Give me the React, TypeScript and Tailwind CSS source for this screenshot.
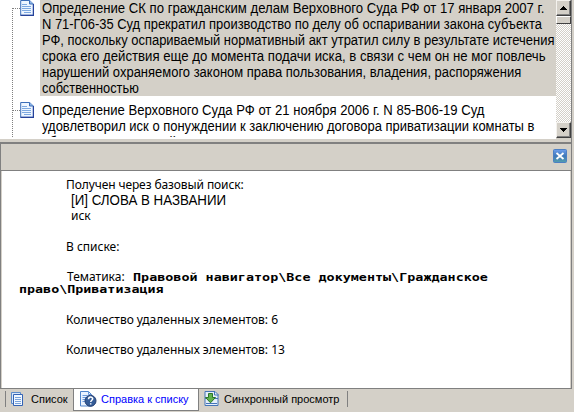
const DocIcon = () => (
  <svg width="14" height="16" viewBox="0 0 14 16" className="block shrink-0">
    <path d="M.7.5h9L13.3 4v11.3H.7z" fill="#eef6ff" stroke="#3c6eb8" />
    <path d="M9.5.5V4h4" fill="#8fb6e8" stroke="#3c6eb8" />
    <path d="M2 4.5h5M2 6.5h9M2 8.5h9M2 10.5h9M4 12.5h7" stroke="#7ea9e0" />
    <path d="M.5 15.3h13V4" fill="none" stroke="#26429a" strokeWidth="1.2" />
  </svg>
);

const ListIcon = () => (
  <svg width="13" height="14" viewBox="0 0 13 14" className="block shrink-0">
    <path d="M.5.5h9v11h-9z" fill="#d9e8fa" stroke="#5b8bcb" />
    <path d="M2.5 2.5h9v11h-9z" fill="#f2f8ff" stroke="#3463b4" />
    <path d="M4 5.500h6M4 7.500h6M4 9.500h6M4 11.500h6" stroke="#79a3dc" />
  </svg>
);

const HelpIcon = () => (
  <svg width="17" height="16" viewBox="0 0 17 16" className="block shrink-0">
    <path d="M.5.5h8l3 3v11.500H.5z" fill="#eaf3ff" stroke="#5085cb" />
    <path d="M8.500.5v3h3M2.500 4.500h5M2.500 6.500h5M2.500 8.500h3M2.500 10.500h3" fill="none" stroke="#6b9bdc" />
    <circle cx="10.500" cy="9.800" r="5.500" fill="#345c98" stroke="#233d70" />
    <path d="M8.500 8.300c0-3 4.200-2.700 4.200-.5 0 1.400-2 1.500-2 3.200M10.700 12.200v1.400" fill="none" stroke="#fff" strokeWidth="1.500" />
  </svg>
);

const SyncIcon = () => (
  <svg width="15" height="15" viewBox="0 0 15 15" className="block shrink-0">
    <path d="M1 .5h10l3 3v11H1z" fill="#e5effb" stroke="#4474b7" />
    <path d="M10.500.5v3.500h4M1 7.500h13M2 12.500h11" fill="none" stroke="#4474b7" />
    <path d="M4.500 2.500h4v4h3L6.500 11.800 1.500 6.500h3z" fill="#62b34c" stroke="#2c752b" />
  </svg>
);

const Arrow = ({ down = false }: { down?: boolean }) => (
  <div className="flex h-4 w-[15px] shrink-0 items-center justify-center border border-t-[#f4f2ee] border-l-[#f4f2ee] border-r-[#404040] border-b-[#404040] bg-[#d4d0c8] shadow-[inset_-1px_-1px_0_#808080]">
    <svg width="7" height="4" viewBox="0 0 7 4" shapeRendering="crispEdges">
      <path d={down ? "M0 0h7v1H6v1H5v1H4v1H3V3H2V2H1V1H0z" : "M3 0h1v1h1v1h1v1h1v1H0V3h1V2h1V1h1z"} />
    </svg>
  </div>
);

type Line = { text: string; fit: string };

const first: Line[] = [
  { text: "Определение СК по гражданским делам Верховного Суда РФ от 17 января 2007 г.", fit: "scale-x-[0.939]" },
  { text: "N 71-Г06-35 Суд прекратил производство по делу об оспаривании закона субъекта", fit: "scale-x-[0.923]" },
  { text: "РФ, поскольку оспариваемый нормативный акт утратил силу в результате истечения", fit: "scale-x-[0.926]" },
  { text: "срока его действия еще до момента подачи иска, в связи с чем он не мог повлечь", fit: "scale-x-[0.941]" },
  { text: "нарушений охраняемого законом права пользования, владения, распоряжения", fit: "scale-x-[0.927]" },
  { text: "собственностью", fit: "scale-x-[0.915]" },
];
const second: Line[] = [
  { text: "Определение Верховного Суда РФ от 21 ноября 2006 г. N 85-В06-19 Суд", fit: "scale-x-[0.935]" },
  { text: "удовлетворил иск о понуждении к заключению договора приватизации комнаты в", fit: "scale-x-[0.927]" },
  { text: "общежитии, в которой", fit: "scale-x-[0.93]" },
];

const Lines = ({ lines }: { lines: Line[] }) => (
  <>
    {lines.map((l) => (
      <div key={l.text} className={`h-4 w-max origin-left ${l.fit}`}>{l.text}</div>
    ))}
  </>
);

export default function App() {
  return (
    <div className="flex h-[412px] w-[574px] flex-col overflow-hidden bg-[#d4d0c8] font-['Liberation_Sans',sans-serif] text-black">
      <div className="flex h-[139px] w-[572px] shrink-0 border-r border-[#808080]">
        <div className="flex h-[139px] w-[556px] shrink-0 flex-col overflow-hidden bg-white pb-0.5">
          <div className="flex h-[137px] overflow-hidden">
            <div className="mt-2 ml-3 flex w-7 shrink-0 flex-col border-l border-dotted border-[#808080]">
              <div className="-mt-2 flex h-[102px] shrink-0 items-start"><div className="mt-2 w-[7px] border-t border-dotted border-[#808080]" /><DocIcon /></div>
              <div className="flex h-[35px] shrink-0 items-start"><div className="mt-2 w-[7px] border-t border-dotted border-[#808080]" /><DocIcon /></div>
            </div>
            <div className="w-[516px] shrink-0 text-[14px] leading-4 whitespace-nowrap">
              <div className="h-24 bg-[#d4d0c8] pl-0.5"><Lines lines={first} /></div>
              <div className="pt-1.5 pl-0.5"><Lines lines={second} /></div>
            </div>
          </div>
        </div>
        <div className="flex h-[138px] w-[15px] shrink-0 flex-col bg-[repeating-conic-gradient(#d4d0c8_0_25%,#fff_0_50%)] bg-[length:2px_2px]">
          <Arrow />
          <div className="h-2 shrink-0 border border-t-white border-l-white border-r-[#404040] border-b-[#404040] bg-[#d4d0c8]" />
          <div className="flex-1" />
          <Arrow down />
        </div>
      </div>
      <div className="h-[3px] w-[572px] shrink-0 border-r border-[#808080]" />
      <div className="flex h-[247px] w-[572px] shrink-0 flex-col border-t-2 border-r border-b border-l border-[#808080]">
        <div className="flex h-[27px] shrink-0 items-start justify-end border-b border-[#808080] pt-[5px] pr-1">
          <svg width="14" height="14" viewBox="0 0 14 14">
            <defs>
              <linearGradient id="close" x1="0" y1="0" x2="0" y2="1">
                <stop offset="0" stopColor="#6f9fee" />
                <stop offset=".5" stopColor="#3f78b8" />
                <stop offset="1" stopColor="#549fae" />
              </linearGradient>
            </defs>
            <rect x=".5" y=".5" width="13" height="13" rx="1" fill="url(#close)" stroke="#4c7fc4" />
            <path d="M3.500 4l7 6M10.500 4l-7 6" stroke="#fff" strokeWidth="1.800" />
          </svg>
        </div>
        <div className="mx-px flex-1 bg-white pt-1.5 pl-[18px] font-['Noto_Sans',sans-serif] text-[12px] leading-[15px] whitespace-nowrap">
          <div className="pl-[46px] tracking-[-0.1px]">Получен через базовый поиск:</div>
          <div className="ml-[51px] w-max origin-left scale-x-[0.952] font-['Liberation_Sans',sans-serif] text-[14px] leading-4">[И] СЛОВА В НАЗВАНИИ</div>
          <div className="pl-[51px]">иск</div>
          <div className="mt-4 pl-[46px]">В списке:</div>
          <div className="mt-[15px] flex h-[15px] pl-[47px]">
            <span>Тематика:</span>
            <b className="ml-2 w-max origin-left scale-x-[1.218] font-['DejaVu_Sans_Mono',monospace] text-[11px] leading-[17px]">Правовой навигатор\Все документы\Гражданское</b>
          </div>
          <div className="-ml-px h-3 w-max origin-left scale-x-[1.213] font-['DejaVu_Sans_Mono',monospace] text-[11px] leading-[11px] font-bold">право\Приватизация</div>
          <div className="mt-4 pl-[46px] tracking-[-0.02px]">Количество удаленных элементов: 6</div>
          <div className="mt-[15px] pl-[46px] tracking-[-0.02px]">Количество удаленных элементов: 13</div>
        </div>
      </div>
      <div className="flex h-[23px] shrink-0 text-[11px] leading-[21px] whitespace-nowrap">
        <div className="flex w-[73px] items-start pl-[5px]"><div className="mt-0.5 mr-[5px] h-4 w-px bg-[#808080]" /><div className="mt-[3px] mr-[7px]"><ListIcon /></div>Список</div>
        <div className="flex h-[22px] w-[126px] items-start border-r border-b border-l border-[#808080] bg-white pl-1.5 text-[#0000ff]"><div className="mt-0.5 mr-1"><HelpIcon /></div>Справка к списку</div>
        <div className="flex w-[148px] items-start pl-[5px]"><div className="mt-0.5 mr-[5px]"><SyncIcon /></div>Синхронный просмотр</div>
        <div className="mt-0.5 h-4 w-px bg-[#808080]" />
      </div>
    </div>
  );
}
